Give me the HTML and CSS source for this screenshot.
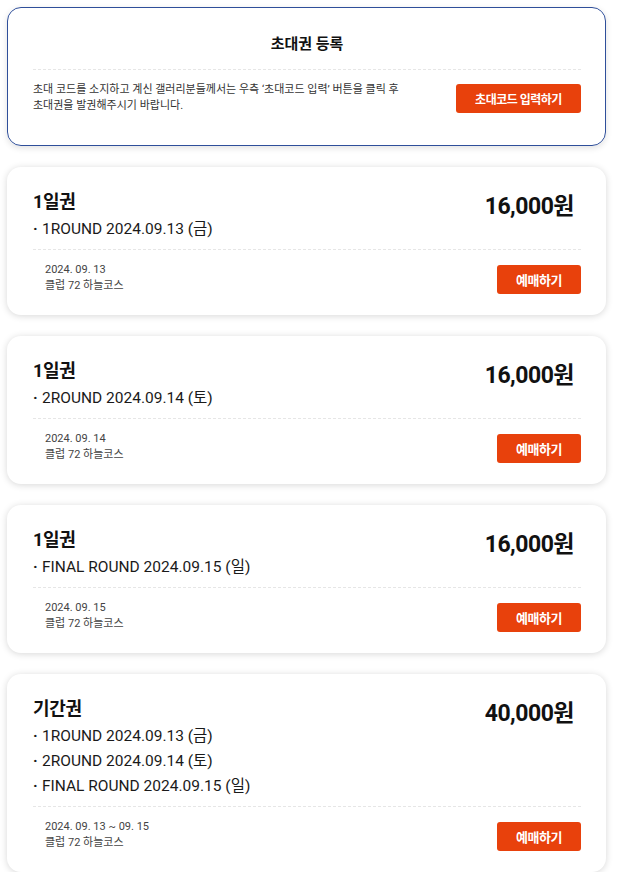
FILE: index.html
```html
<!DOCTYPE html>
<html lang="ko">
<head>
<meta charset="utf-8">
<title>티켓 예매</title>
<link rel="stylesheet" href="styles.css">
</head>
<body>
<div class="page">
  <section class="invite">
    <h2 class="invite-title">초대권 등록</h2>
    <div class="invite-body">
      <p class="invite-text">초대 코드를 소지하고 계신 갤러리분들께서는 우측 ‘초대코드 입력’ 버튼을 클릭 후<br>초대권을 발권해주시기 바랍니다.</p>
      <button class="btn btn-invite">초대코드 입력하기</button>
    </div>
  </section>

  <section class="ticket">
    <div class="ticket-head">
      <div class="ticket-info">
        <h3 class="ticket-name">1일권</h3>
        <ul class="rounds">
          <li><span class="dot">·</span>1ROUND 2024.09.13 (금)</li>
        </ul>
      </div>
      <div class="price">16,000원</div>
    </div>
    <div class="ticket-foot">
      <div class="meta">
        <div>2024. 09. 13</div>
        <div>클럽 72 하늘코스</div>
      </div>
      <button class="btn btn-buy">예매하기</button>
    </div>
  </section>

  <section class="ticket">
    <div class="ticket-head">
      <div class="ticket-info">
        <h3 class="ticket-name">1일권</h3>
        <ul class="rounds">
          <li><span class="dot">·</span>2ROUND 2024.09.14 (토)</li>
        </ul>
      </div>
      <div class="price">16,000원</div>
    </div>
    <div class="ticket-foot">
      <div class="meta">
        <div>2024. 09. 14</div>
        <div>클럽 72 하늘코스</div>
      </div>
      <button class="btn btn-buy">예매하기</button>
    </div>
  </section>

  <section class="ticket">
    <div class="ticket-head">
      <div class="ticket-info">
        <h3 class="ticket-name">1일권</h3>
        <ul class="rounds">
          <li><span class="dot">·</span>FINAL ROUND 2024.09.15 (일)</li>
        </ul>
      </div>
      <div class="price">16,000원</div>
    </div>
    <div class="ticket-foot">
      <div class="meta">
        <div>2024. 09. 15</div>
        <div>클럽 72 하늘코스</div>
      </div>
      <button class="btn btn-buy">예매하기</button>
    </div>
  </section>

  <section class="ticket">
    <div class="ticket-head">
      <div class="ticket-info">
        <h3 class="ticket-name">기간권</h3>
        <ul class="rounds">
          <li><span class="dot">·</span>1ROUND 2024.09.13 (금)</li>
          <li><span class="dot">·</span>2ROUND 2024.09.14 (토)</li>
          <li><span class="dot">·</span>FINAL ROUND 2024.09.15 (일)</li>
        </ul>
      </div>
      <div class="price">40,000원</div>
    </div>
    <div class="ticket-foot">
      <div class="meta">
        <div>2024. 09. 13 ~ 09. 15</div>
        <div>클럽 72 하늘코스</div>
      </div>
      <button class="btn btn-buy">예매하기</button>
    </div>
  </section>
</div>
</body>
</html>
```
FILE: styles.css
```css
* { box-sizing: border-box; }
html, body { margin: 0; padding: 0; background: #fff; }
body {
  font-family: Roboto, "Noto Sans CJK KR", sans-serif;
  color: #111;
}
.page {
  width: 599px;
  margin-left: 7px;
  padding-top: 7px;
  display: flex;
  flex-direction: column;
  gap: 21px;
}
.invite {
  border: 1px solid #2f4f9a;
  border-radius: 14px;
  padding: 25px 24px 31px 25px;
  box-shadow: 0 2px 6px rgba(0,0,0,0.12);
}
.invite-title {
  margin: 0;
  text-align: center;
  font-size: 15px;
  line-height: 22px;
  font-weight: 700;
  color: #111;
  padding-bottom: 14px;
  border-bottom: 1px dashed #e6e6e6;
}
.invite-body {
  display: flex;
  align-items: center;
  justify-content: space-between;
  padding-top: 12px;
}
.invite-text {
  margin: 0;
  font-size: 11px;
  line-height: 16px;
  letter-spacing: 0;
  color: #333;
}
.btn {
  border: 0;
  background: #e8410c;
  color: #fff;
  font-family: Roboto, "Noto Sans CJK KR", sans-serif;
  font-weight: 700;
  border-radius: 3px;
  height: 29px;
  padding: 0;
  cursor: pointer;
}
.btn-invite {
  width: 125px;
  font-size: 12px;
  letter-spacing: -0.5px;
}
.btn-buy {
  width: 84px;
  font-size: 13px;
  letter-spacing: -0.5px;
}
.ticket {
  border-radius: 14px;
  padding: 22px 25px 21px 26px;
  box-shadow: 0 1px 7px rgba(0,0,0,0.16);
  background: #fff;
}
.ticket-head {
  display: flex;
  justify-content: space-between;
  align-items: flex-start;
  padding-bottom: 7px;
  border-bottom: 1px dashed #e6e6e6;
}
.ticket-name {
  margin: 0 0 2px;
  font-size: 18px;
  line-height: 26px;
  font-weight: 700;
  letter-spacing: -0.3px;
  color: #111;
}
.rounds {
  list-style: none;
  margin: 0;
  padding: 0;
}
.rounds li {
  font-size: 15.5px;
  line-height: 25px;
  letter-spacing: 0;
  color: #1a1a1a;
}
.dot {
  display: inline-block;
  width: 9px;
  font-weight: 700;
}
.price {
  margin-top: 3px;
  margin-right: 7px;
  font-size: 23px;
  line-height: 30px;
  font-weight: 700;
  letter-spacing: -0.5px;
  color: #111;
}
.ticket-foot {
  display: flex;
  justify-content: space-between;
  align-items: flex-end;
  padding-top: 13px;
}
.meta {
  align-self: flex-start;
  margin-top: -1px;
  padding-left: 12px;
  font-size: 11px;
  line-height: 16px;
  color: #444;
  letter-spacing: 0;
}
```
